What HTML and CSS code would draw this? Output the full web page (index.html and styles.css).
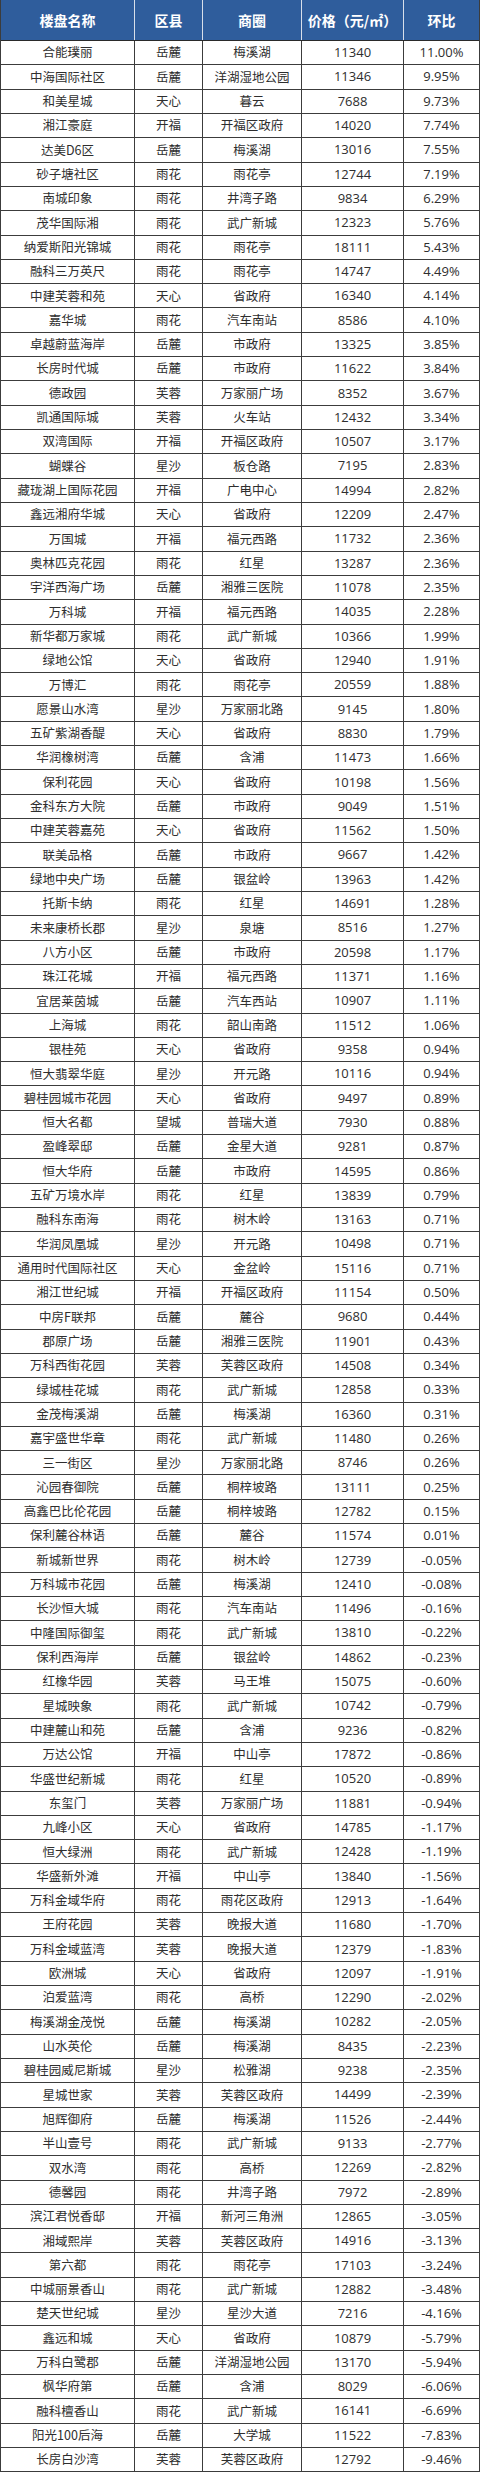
FILE: index.html
```html
<!DOCTYPE html>
<html lang="zh-CN">
<head>
<meta charset="utf-8">
<title>楼盘价格环比</title>
<link rel="stylesheet" href="styles.css">
</head>
<body>
<div class="table">
<div class="row head"><span>楼盘名称</span><span>区县</span><span>商圈</span><span>价格（元/㎡）</span><span>环比</span></div>
<div class="row"><span>合能璞丽</span><span>岳麓</span><span>梅溪湖</span><span class="num">11340</span><span class="num">11.00%</span></div>
<div class="row"><span>中海国际社区</span><span>岳麓</span><span>洋湖湿地公园</span><span class="num">11346</span><span class="num">9.95%</span></div>
<div class="row"><span>和美星城</span><span>天心</span><span>暮云</span><span class="num">7688</span><span class="num">9.73%</span></div>
<div class="row"><span>湘江豪庭</span><span>开福</span><span>开福区政府</span><span class="num">14020</span><span class="num">7.74%</span></div>
<div class="row"><span>达美D6区</span><span>岳麓</span><span>梅溪湖</span><span class="num">13016</span><span class="num">7.55%</span></div>
<div class="row"><span>砂子塘社区</span><span>雨花</span><span>雨花亭</span><span class="num">12744</span><span class="num">7.19%</span></div>
<div class="row"><span>南城印象</span><span>雨花</span><span>井湾子路</span><span class="num">9834</span><span class="num">6.29%</span></div>
<div class="row"><span>茂华国际湘</span><span>雨花</span><span>武广新城</span><span class="num">12323</span><span class="num">5.76%</span></div>
<div class="row"><span>纳爱斯阳光锦城</span><span>雨花</span><span>雨花亭</span><span class="num">18111</span><span class="num">5.43%</span></div>
<div class="row"><span>融科三万英尺</span><span>雨花</span><span>雨花亭</span><span class="num">14747</span><span class="num">4.49%</span></div>
<div class="row"><span>中建芙蓉和苑</span><span>天心</span><span>省政府</span><span class="num">16340</span><span class="num">4.14%</span></div>
<div class="row"><span>嘉华城</span><span>雨花</span><span>汽车南站</span><span class="num">8586</span><span class="num">4.10%</span></div>
<div class="row"><span>卓越蔚蓝海岸</span><span>岳麓</span><span>市政府</span><span class="num">13325</span><span class="num">3.85%</span></div>
<div class="row"><span>长房时代城</span><span>岳麓</span><span>市政府</span><span class="num">11622</span><span class="num">3.84%</span></div>
<div class="row"><span>德政园</span><span>芙蓉</span><span>万家丽广场</span><span class="num">8352</span><span class="num">3.67%</span></div>
<div class="row"><span>凯通国际城</span><span>芙蓉</span><span>火车站</span><span class="num">12432</span><span class="num">3.34%</span></div>
<div class="row"><span>双湾国际</span><span>开福</span><span>开福区政府</span><span class="num">10507</span><span class="num">3.17%</span></div>
<div class="row"><span>蝴蝶谷</span><span>星沙</span><span>板仓路</span><span class="num">7195</span><span class="num">2.83%</span></div>
<div class="row"><span>藏珑湖上国际花园</span><span>开福</span><span>广电中心</span><span class="num">14994</span><span class="num">2.82%</span></div>
<div class="row"><span>鑫远湘府华城</span><span>天心</span><span>省政府</span><span class="num">12209</span><span class="num">2.47%</span></div>
<div class="row"><span>万国城</span><span>开福</span><span>福元西路</span><span class="num">11732</span><span class="num">2.36%</span></div>
<div class="row"><span>奥林匹克花园</span><span>雨花</span><span>红星</span><span class="num">13287</span><span class="num">2.36%</span></div>
<div class="row"><span>宇洋西海广场</span><span>岳麓</span><span>湘雅三医院</span><span class="num">11078</span><span class="num">2.35%</span></div>
<div class="row"><span>万科城</span><span>开福</span><span>福元西路</span><span class="num">14035</span><span class="num">2.28%</span></div>
<div class="row"><span>新华都万家城</span><span>雨花</span><span>武广新城</span><span class="num">10366</span><span class="num">1.99%</span></div>
<div class="row"><span>绿地公馆</span><span>天心</span><span>省政府</span><span class="num">12940</span><span class="num">1.91%</span></div>
<div class="row"><span>万博汇</span><span>雨花</span><span>雨花亭</span><span class="num">20559</span><span class="num">1.88%</span></div>
<div class="row"><span>愿景山水湾</span><span>星沙</span><span>万家丽北路</span><span class="num">9145</span><span class="num">1.80%</span></div>
<div class="row"><span>五矿紫湖香醍</span><span>天心</span><span>省政府</span><span class="num">8830</span><span class="num">1.79%</span></div>
<div class="row"><span>华润橡树湾</span><span>岳麓</span><span>含浦</span><span class="num">11473</span><span class="num">1.66%</span></div>
<div class="row"><span>保利花园</span><span>天心</span><span>省政府</span><span class="num">10198</span><span class="num">1.56%</span></div>
<div class="row"><span>金科东方大院</span><span>岳麓</span><span>市政府</span><span class="num">9049</span><span class="num">1.51%</span></div>
<div class="row"><span>中建芙蓉嘉苑</span><span>天心</span><span>省政府</span><span class="num">11562</span><span class="num">1.50%</span></div>
<div class="row"><span>联美品格</span><span>岳麓</span><span>市政府</span><span class="num">9667</span><span class="num">1.42%</span></div>
<div class="row"><span>绿地中央广场</span><span>岳麓</span><span>银盆岭</span><span class="num">13963</span><span class="num">1.42%</span></div>
<div class="row"><span>托斯卡纳</span><span>雨花</span><span>红星</span><span class="num">14691</span><span class="num">1.28%</span></div>
<div class="row"><span>未来康桥长郡</span><span>星沙</span><span>泉塘</span><span class="num">8516</span><span class="num">1.27%</span></div>
<div class="row"><span>八方小区</span><span>岳麓</span><span>市政府</span><span class="num">20598</span><span class="num">1.17%</span></div>
<div class="row"><span>珠江花城</span><span>开福</span><span>福元西路</span><span class="num">11371</span><span class="num">1.16%</span></div>
<div class="row"><span>宜居莱茵城</span><span>岳麓</span><span>汽车西站</span><span class="num">10907</span><span class="num">1.11%</span></div>
<div class="row"><span>上海城</span><span>雨花</span><span>韶山南路</span><span class="num">11512</span><span class="num">1.06%</span></div>
<div class="row"><span>银桂苑</span><span>天心</span><span>省政府</span><span class="num">9358</span><span class="num">0.94%</span></div>
<div class="row"><span>恒大翡翠华庭</span><span>星沙</span><span>开元路</span><span class="num">10116</span><span class="num">0.94%</span></div>
<div class="row"><span>碧桂园城市花园</span><span>天心</span><span>省政府</span><span class="num">9497</span><span class="num">0.89%</span></div>
<div class="row"><span>恒大名都</span><span>望城</span><span>普瑞大道</span><span class="num">7930</span><span class="num">0.88%</span></div>
<div class="row"><span>盈峰翠邸</span><span>岳麓</span><span>金星大道</span><span class="num">9281</span><span class="num">0.87%</span></div>
<div class="row"><span>恒大华府</span><span>岳麓</span><span>市政府</span><span class="num">14595</span><span class="num">0.86%</span></div>
<div class="row"><span>五矿万境水岸</span><span>雨花</span><span>红星</span><span class="num">13839</span><span class="num">0.79%</span></div>
<div class="row"><span>融科东南海</span><span>雨花</span><span>树木岭</span><span class="num">13163</span><span class="num">0.71%</span></div>
<div class="row"><span>华润凤凰城</span><span>星沙</span><span>开元路</span><span class="num">10498</span><span class="num">0.71%</span></div>
<div class="row"><span>通用时代国际社区</span><span>天心</span><span>金盆岭</span><span class="num">15116</span><span class="num">0.71%</span></div>
<div class="row"><span>湘江世纪城</span><span>开福</span><span>开福区政府</span><span class="num">11154</span><span class="num">0.50%</span></div>
<div class="row"><span>中房F联邦</span><span>岳麓</span><span>麓谷</span><span class="num">9680</span><span class="num">0.44%</span></div>
<div class="row"><span>郡原广场</span><span>岳麓</span><span>湘雅三医院</span><span class="num">11901</span><span class="num">0.43%</span></div>
<div class="row"><span>万科西街花园</span><span>芙蓉</span><span>芙蓉区政府</span><span class="num">14508</span><span class="num">0.34%</span></div>
<div class="row"><span>绿城桂花城</span><span>雨花</span><span>武广新城</span><span class="num">12858</span><span class="num">0.33%</span></div>
<div class="row"><span>金茂梅溪湖</span><span>岳麓</span><span>梅溪湖</span><span class="num">16360</span><span class="num">0.31%</span></div>
<div class="row"><span>嘉宇盛世华章</span><span>雨花</span><span>武广新城</span><span class="num">11480</span><span class="num">0.26%</span></div>
<div class="row"><span>三一街区</span><span>星沙</span><span>万家丽北路</span><span class="num">8746</span><span class="num">0.26%</span></div>
<div class="row"><span>沁园春御院</span><span>岳麓</span><span>桐梓坡路</span><span class="num">13111</span><span class="num">0.25%</span></div>
<div class="row"><span>高鑫巴比伦花园</span><span>岳麓</span><span>桐梓坡路</span><span class="num">12782</span><span class="num">0.15%</span></div>
<div class="row"><span>保利麓谷林语</span><span>岳麓</span><span>麓谷</span><span class="num">11574</span><span class="num">0.01%</span></div>
<div class="row"><span>新城新世界</span><span>雨花</span><span>树木岭</span><span class="num">12739</span><span class="num">-0.05%</span></div>
<div class="row"><span>万科城市花园</span><span>岳麓</span><span>梅溪湖</span><span class="num">12410</span><span class="num">-0.08%</span></div>
<div class="row"><span>长沙恒大城</span><span>雨花</span><span>汽车南站</span><span class="num">11496</span><span class="num">-0.16%</span></div>
<div class="row"><span>中隆国际御玺</span><span>雨花</span><span>武广新城</span><span class="num">13810</span><span class="num">-0.22%</span></div>
<div class="row"><span>保利西海岸</span><span>岳麓</span><span>银盆岭</span><span class="num">14862</span><span class="num">-0.23%</span></div>
<div class="row"><span>红橡华园</span><span>芙蓉</span><span>马王堆</span><span class="num">15075</span><span class="num">-0.60%</span></div>
<div class="row"><span>星城映象</span><span>雨花</span><span>武广新城</span><span class="num">10742</span><span class="num">-0.79%</span></div>
<div class="row"><span>中建麓山和苑</span><span>岳麓</span><span>含浦</span><span class="num">9236</span><span class="num">-0.82%</span></div>
<div class="row"><span>万达公馆</span><span>开福</span><span>中山亭</span><span class="num">17872</span><span class="num">-0.86%</span></div>
<div class="row"><span>华盛世纪新城</span><span>雨花</span><span>红星</span><span class="num">10520</span><span class="num">-0.89%</span></div>
<div class="row"><span>东玺门</span><span>芙蓉</span><span>万家丽广场</span><span class="num">11881</span><span class="num">-0.94%</span></div>
<div class="row"><span>九峰小区</span><span>天心</span><span>省政府</span><span class="num">14785</span><span class="num">-1.17%</span></div>
<div class="row"><span>恒大绿洲</span><span>雨花</span><span>武广新城</span><span class="num">12428</span><span class="num">-1.19%</span></div>
<div class="row"><span>华盛新外滩</span><span>开福</span><span>中山亭</span><span class="num">13840</span><span class="num">-1.56%</span></div>
<div class="row"><span>万科金域华府</span><span>雨花</span><span>雨花区政府</span><span class="num">12913</span><span class="num">-1.64%</span></div>
<div class="row"><span>王府花园</span><span>芙蓉</span><span>晚报大道</span><span class="num">11680</span><span class="num">-1.70%</span></div>
<div class="row"><span>万科金域蓝湾</span><span>芙蓉</span><span>晚报大道</span><span class="num">12379</span><span class="num">-1.83%</span></div>
<div class="row"><span>欧洲城</span><span>天心</span><span>省政府</span><span class="num">12097</span><span class="num">-1.91%</span></div>
<div class="row"><span>泊爱蓝湾</span><span>雨花</span><span>高桥</span><span class="num">12290</span><span class="num">-2.02%</span></div>
<div class="row"><span>梅溪湖金茂悦</span><span>岳麓</span><span>梅溪湖</span><span class="num">10282</span><span class="num">-2.05%</span></div>
<div class="row"><span>山水英伦</span><span>岳麓</span><span>梅溪湖</span><span class="num">8435</span><span class="num">-2.23%</span></div>
<div class="row"><span>碧桂园威尼斯城</span><span>星沙</span><span>松雅湖</span><span class="num">9238</span><span class="num">-2.35%</span></div>
<div class="row"><span>星城世家</span><span>芙蓉</span><span>芙蓉区政府</span><span class="num">14499</span><span class="num">-2.39%</span></div>
<div class="row"><span>旭辉御府</span><span>岳麓</span><span>梅溪湖</span><span class="num">11526</span><span class="num">-2.44%</span></div>
<div class="row"><span>半山壹号</span><span>雨花</span><span>武广新城</span><span class="num">9133</span><span class="num">-2.77%</span></div>
<div class="row"><span>双水湾</span><span>雨花</span><span>高桥</span><span class="num">12269</span><span class="num">-2.82%</span></div>
<div class="row"><span>德馨园</span><span>雨花</span><span>井湾子路</span><span class="num">7972</span><span class="num">-2.89%</span></div>
<div class="row"><span>滨江君悦香邸</span><span>开福</span><span>新河三角洲</span><span class="num">12865</span><span class="num">-3.05%</span></div>
<div class="row"><span>湘域熙岸</span><span>芙蓉</span><span>芙蓉区政府</span><span class="num">14916</span><span class="num">-3.13%</span></div>
<div class="row"><span>第六都</span><span>雨花</span><span>雨花亭</span><span class="num">17103</span><span class="num">-3.24%</span></div>
<div class="row"><span>中城丽景香山</span><span>雨花</span><span>武广新城</span><span class="num">12882</span><span class="num">-3.48%</span></div>
<div class="row"><span>楚天世纪城</span><span>星沙</span><span>星沙大道</span><span class="num">7216</span><span class="num">-4.16%</span></div>
<div class="row"><span>鑫远和城</span><span>天心</span><span>省政府</span><span class="num">10879</span><span class="num">-5.79%</span></div>
<div class="row"><span>万科白鹭郡</span><span>岳麓</span><span>洋湖湿地公园</span><span class="num">13170</span><span class="num">-5.94%</span></div>
<div class="row"><span>枫华府第</span><span>岳麓</span><span>含浦</span><span class="num">8029</span><span class="num">-6.06%</span></div>
<div class="row"><span>融科檀香山</span><span>雨花</span><span>武广新城</span><span class="num">16141</span><span class="num">-6.69%</span></div>
<div class="row"><span>阳光100后海</span><span>岳麓</span><span>大学城</span><span class="num">11522</span><span class="num">-7.83%</span></div>
<div class="row"><span>长房白沙湾</span><span>芙蓉</span><span>芙蓉区政府</span><span class="num">12792</span><span class="num">-9.46%</span></div>
</div>
</body>
</html>
```
FILE: styles.css
```css
html, body {
  margin: 0;
  padding: 0;
  background: #ffffff;
}

body {
  font-family: "Noto Sans CJK SC", "Noto Sans", sans-serif;
  color: #2e2e2e;
}

.table {
  width: 480px;
  border-left: 1px solid #3c3c3c;
  border-right: 1px solid #3c3c3c;
  box-sizing: border-box;
}

.row {
  display: grid;
  grid-template-columns: 133px 68px 99px 102px 1fr;
  height: 24.32px;
  box-sizing: border-box;
  border-bottom: 1px solid #3c3c3c;
}

.row > span {
  display: flex;
  align-items: center;
  justify-content: center;
  font-size: 12.5px;
  line-height: 1;
  white-space: nowrap;
  border-left: 1px solid #3c3c3c;
}

.row > span:first-child {
  border-left: none;
}

.row > span.num {
  font-family: "Open Sans", "Noto Sans", sans-serif;
  font-size: 13px;
}

.row.head {
  height: 41px;
  background: #2f5d9c;
  border-bottom: 1px solid #2a2a2a;
}

.row.head > span {
  color: #ffffff;
  font-weight: 700;
  font-size: 14px;
  border-left: 1px solid #d8dfea;
}

.row.head > span:first-child {
  border-left: none;
}
```
